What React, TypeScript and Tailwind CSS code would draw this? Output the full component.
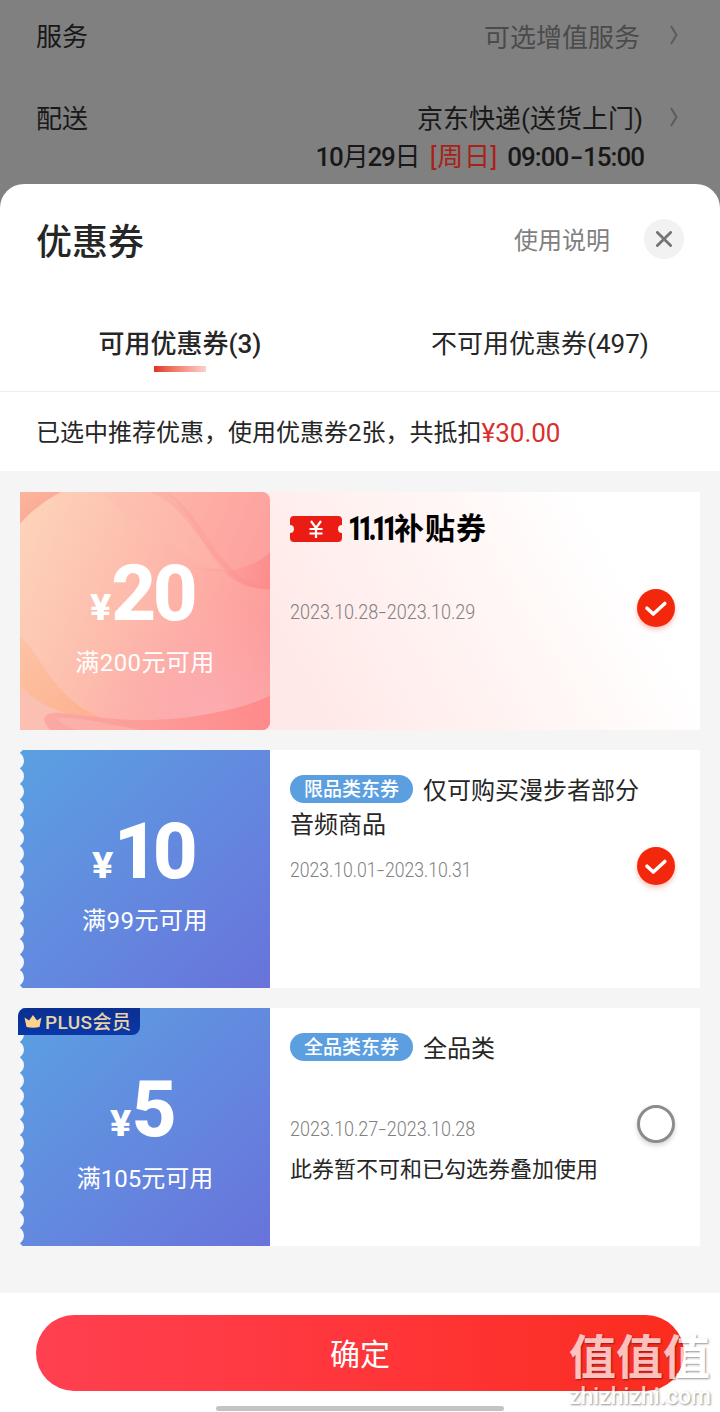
import type { ReactNode } from "react";

function Chevron() {
  return (
    <svg viewBox="0 0 10 20" className="h-5 w-2.5" fill="none" stroke="#5c5c5c" strokeWidth="2">
      <path d="M2 1 L7.5 10 L2 19" />
    </svg>
  );
}

function CheckCircle() {
  return (
    <div className="flex size-[38px] items-center justify-center rounded-full bg-[#f2270c] shadow-[0_3px_5px_rgba(242,39,12,0.28)]">
      <svg viewBox="0 0 38 38" className="size-[38px]" fill="none" stroke="#fff" strokeWidth="3.6" strokeLinecap="round" strokeLinejoin="round">
        <path d="M10 19.2 L16.3 25 L27.8 14.5" />
      </svg>
    </div>
  );
}

function EmptyCircle() {
  return <div className="size-[38px] rounded-full border-[3px] border-[#8c8c8c] bg-white shadow-[0_3px_5px_rgba(0,0,0,0.16)]" />;
}

function PinkArt() {
  return (
    <svg viewBox="0 0 250 238" className="absolute inset-0 h-full w-full">
      <defs>
        <linearGradient id="base" x1="0" y1="0.2" x2="1" y2="0.6">
          <stop offset="0" stopColor="#fdd2b9" />
          <stop offset="0.5" stopColor="#fdb9ab" />
          <stop offset="1" stopColor="#fd9b9b" />
        </linearGradient>
        <linearGradient id="corner" x1="0" y1="0" x2="1" y2="1">
          <stop offset="0" stopColor="#fdb59c" />
          <stop offset="1" stopColor="#f6a394" />
        </linearGradient>
        <linearGradient id="orange" x1="0" y1="0" x2="1" y2="1">
          <stop offset="0" stopColor="#fdc3a4" />
          <stop offset="1" stopColor="#fdb08f" />
        </linearGradient>
        <linearGradient id="wave" x1="0" y1="0" x2="1" y2="0">
          <stop offset="0" stopColor="#fba9a3" />
          <stop offset="1" stopColor="#ff8a8b" />
        </linearGradient>
        <linearGradient id="ribbon" x1="0" y1="0" x2="1" y2="1">
          <stop offset="0" stopColor="#fa9c98" stopOpacity="0.3" />
          <stop offset="1" stopColor="#fc8c8e" stopOpacity="0.35" />
        </linearGradient>
        <linearGradient id="fold" x1="0" y1="0" x2="1" y2="0">
          <stop offset="0" stopColor="#fd9494" stopOpacity="0" />
          <stop offset="1" stopColor="#fd8486" stopOpacity="0.7" />
        </linearGradient>
        <radialGradient id="glow" cx="0.75" cy="0.95" r="0.5">
          <stop offset="0" stopColor="#fcaeb2" stopOpacity="0.9" />
          <stop offset="1" stopColor="#fcaeb2" stopOpacity="0" />
        </radialGradient>
      </defs>
      <rect width="250" height="238" fill="url(#base)" />
      <rect width="250" height="238" fill="url(#glow)" />
      <path d="M83 0 C98 20 120 30 145 48 C165 64 180 76 210 80 C180 56 172 12 132 0 Z" fill="#fcbbaf" opacity="0.35" />
      <path d="M145 0 H250 V60 C236 72 222 78 204 79 C184 60 172 18 145 0 Z" fill="#ff9a9c" opacity="0.25" />
      <path d="M130 0 C158 10 174 40 198 70 C212 88 228 97 250 98 L250 95 C230 93 216 84 202 66 C180 38 168 10 146 0 Z" fill="url(#ribbon)" />
      <path d="M170 76 C205 84 234 76 250 60 L250 97 C230 97 214 92 202 77 Z" fill="url(#fold)" />
      <path d="M0 0 H41 C24 9 10 20 0 32 Z" fill="url(#corner)" />
      <path d="M0 145 C22 162 32 207 84 227 L60 227 C36 222 18 214 0 193 Z" fill="url(#orange)" />
      <path d="M0 193 C20 215 46 225 84 227 L84 238 H0 Z" fill="#fcc0b2" />
      <path d="M30 238 C18 226 26 219 42 221 C86 226 112 231 162 226 C200 221 228 214 250 204 V238 Z" fill="url(#wave)" />
      <path d="M36 226 C58 224 92 233 122 238 L56 238 C48 235 40 231 36 226 Z" fill="#fcb8ae" opacity="0.6" />
    </svg>
  );
}

function ScallopEdge() {
  return (
    <svg viewBox="0 0 6 238" className="absolute left-0 top-0 h-[238px] w-1.5" fill="#f5f8fc">
      {Array.from({ length: 16 }, (_, i) => (
        <circle key={i} cx="-5" cy={10.7 + i * 15.5} r="9" />
      ))}
      <circle cx="-5" cy="-4.8" r="9" />
    </svg>
  );
}

function Amount({ value, condition, digits, note }: { value: string; condition: string; digits: string; note: string }) {
  return (
    <div className="relative flex h-full flex-col items-center text-white">
      <div className="mt-[62px] flex h-20 items-baseline pr-1 leading-[80px] font-extrabold">
        <span className="inline-block origin-right scale-x-[1.1] text-[36px]">¥</span>
        <span className={digits}>{value}</span>
      </div>
      <div className={"mt-[11px] h-9 text-[24px] leading-9 whitespace-nowrap " + note}>{condition}</div>
    </div>
  );
}

function Coupon({ left, children, control, tone = "bg-white" }: { left: ReactNode; children: ReactNode; control: ReactNode; tone?: string }) {
  return (
    <div className={"flex h-[238px] w-[680px] " + tone}>
      {left}
      <div className="flex w-[367px] shrink-0 flex-col pl-5">{children}</div>
      <div className="mb-[7px] self-center">{control}</div>
    </div>
  );
}

function Dates({ children, width }: { children: ReactNode; width: string }) {
  return (
    <div className={width}>
      <span className="inline-flex origin-left scale-x-[0.855] items-center text-[21px] leading-6 font-[350] whitespace-nowrap text-[#808080]">{children}</span>
    </div>
  );
}

function Dash() {
  return <span className="inline-block scale-x-[1.5] px-[2px]">-</span>;
}

function Tag({ children }: { children: string }) {
  return (
    <span className="mr-2.5 inline-flex h-7 w-[123px] shrink-0 items-center justify-center rounded-full bg-[#5b9fe0] text-[19px] leading-7 font-medium text-white">
      <span className="pt-px">{children}</span>
    </span>
  );
}

export default function App() {
  return (
    <div className="relative flex h-[1412px] w-[720px] flex-col overflow-hidden bg-[#808080] font-[Roboto,'Noto_Sans_CJK_SC',sans-serif] text-[#262626]">
      <div className="h-[184px] shrink-0 text-[26px] text-[#181818]">
        <div className="flex h-[74px] items-center justify-between pl-9 pr-[41px]">
          <span>服务</span>
          <div className="flex items-center gap-[29px] text-[#4b4b4b]">
            <span className="pt-0.5">可选增值服务</span>
            <div className="pb-1"><Chevron /></div>
          </div>
        </div>
        <div className="mt-[25px] flex h-10 items-center justify-between pl-9 pr-[41px]">
          <span>配送</span>
          <div className="flex items-center gap-[26px]">
            <span>京东快递(送货上门)</span>
            <div className="pb-1"><Chevron /></div>
          </div>
        </div>
        <div className="flex h-9 items-center justify-end gap-[9px] pr-[76px] leading-9">
          <span className="font-medium tracking-[-1.2px]">10<span className="font-normal">月</span>29<span className="font-normal tracking-normal">日</span></span>
          <span className="tracking-[0.7px] text-[#a82218]">[周日]</span>
          <span className="flex font-medium tracking-[-1px]">09:00<span className="mx-[3.5px] scale-x-[1.5]">-</span>15:00</span>
        </div>
      </div>

      <div className="flex grow flex-col overflow-hidden rounded-t-[24px] bg-white">
        <div className="flex h-[110px] shrink-0 items-center pl-9 pr-9">
          <h1 className="pt-[7px] text-[36px] leading-[44px] font-medium">优惠券</h1>
          <span className="ml-auto pt-[3px] text-[24px] text-[#808080]">使用说明</span>
          <div className="ml-[34px] flex size-10 items-center justify-center rounded-full bg-[#f2f2f2]">
            <svg viewBox="0 0 16 16" className="size-4" stroke="#757575" strokeWidth="2.8" strokeLinecap="round">
              <path d="M1.4 1.4 L14.6 14.6 M14.6 1.4 L1.4 14.6" />
            </svg>
          </div>
        </div>

        <div className="grid h-[98px] shrink-0 grid-cols-2 border-b border-[#efefef] text-[26px] leading-9">
          <div className="flex flex-col items-center pt-8">
            <span className="font-medium">可用优惠券(3)</span>
            <span className="mt-1 h-1.5 w-[52px] bg-linear-to-r from-[#e0301e] to-[#fbd0cd]" />
          </div>
          <div className="flex flex-col items-center pt-8">
            <span>不可用优惠券(497)</span>
          </div>
        </div>

        <div className="flex h-[79px] shrink-0 items-center pt-[3px] pl-9 text-[24px] whitespace-nowrap">
          已选中推荐优惠，使用优惠券2张，共抵扣<span className="text-[26px] text-[#d9302c]">¥30.00</span>
        </div>

        <div className="flex h-[822px] shrink-0 flex-col gap-5 bg-[#f5f5f5] px-5 pt-[21px]">
          <Coupon
            tone="bg-[linear-gradient(60deg,#ffe9e8_0%,#ffe9e8_38%,#fff9f8_72%,#ffffff_85%)]"
            control={<CheckCircle />}
            left={
              <div className="relative h-[238px] w-[250px] shrink-0 overflow-hidden rounded-r-[8px]">
                <PinkArt />
                <Amount value="20" condition="满200元可用" digits="text-[78px] tracking-[-3.5px]" note="tracking-[0.4px]" />
              </div>
            }
          >
            <div className="mt-[21px] flex h-8 items-center">
              <svg viewBox="0 0 52 26" className="h-[26px] w-[52px] shrink-0">
                <path d="M4 0 H48 Q52 0 52 4 V9 A4 4 0 0 0 52 17 V22 Q52 26 48 26 H4 Q0 26 0 22 V17 A4 4 0 0 0 0 9 V4 Q0 0 4 0 Z" fill="#ea1c13" />
                <path d="M21 5 L26 12 L31 5 M26 12 V22 M19.5 13 H32.5 M19.5 17.5 H32.5" fill="none" stroke="#fff" strokeWidth="2.2" />
              </svg>
              <div className="ml-1.5 flex items-center leading-8 font-black text-black">
                <span className="inline-block w-[46px] origin-left scale-x-[0.76] text-[33px] tracking-[-5.4px] whitespace-nowrap">11.11</span>
                <span className="text-[30px] font-bold tracking-[1px]">补贴券</span>
              </div>
            </div>
            <Dates width="mt-[55px] h-6">2023.10.28<Dash />2023.10.29</Dates>
          </Coupon>

          <Coupon
            control={<CheckCircle />}
            left={
              <div className="relative h-[238px] w-[250px] shrink-0 overflow-hidden bg-linear-to-br from-[#5aa0e2] to-[#6873db]">
                <ScallopEdge />
                <Amount value="10" condition="满99元可用" digits="text-[78px] tracking-[-6px]" note="tracking-[0.5px]" />
              </div>
            }
          >
            <div className="mt-6 text-[24px] leading-[34px]">
              <div className="flex h-[34px] items-center whitespace-nowrap"><div className="flex pb-1"><Tag>限品类东券</Tag></div><span>仅可购买漫步者部分</span></div>
              <div>音频商品</div>
            </div>
            <Dates width="mt-4 h-6 origin-left scale-x-[0.98]">2023.10.01<Dash />2023.10.31</Dates>
          </Coupon>

          <Coupon
            control={<EmptyCircle />}
            left={
              <div className="relative h-[238px] w-[250px] shrink-0">
                <div className="relative h-full overflow-hidden bg-linear-to-br from-[#5aa0e2] to-[#6873db]">
                  <ScallopEdge />
                  <Amount value="5" condition="满105元可用" digits="text-[78px] tracking-[-3px]" note="" />
                </div>
                <div className="absolute -left-0.5 top-0 flex h-[27px] w-[122px] items-center rounded-tl-[8px] rounded-br-[8px] bg-linear-to-b from-[#0b2f91] to-[#0a38a8] pl-1.5">
                  <svg viewBox="0 0 18 13" className="mr-[3px] h-[13px] w-[18px] shrink-0" fill="#fdd28a">
                    <path d="M0.5 2.5 L5 5.5 L9 0 L13 5.5 L17.5 2.5 L15.5 12 Q9 13.5 2.5 12 Z" />
                  </svg>
                  <span className="pt-0.5 text-[19px] leading-[25px] font-medium tracking-[0.4px] whitespace-nowrap text-[#e6d3a6]">PLUS会员</span>
                </div>
              </div>
            }
          >
            <div className="mt-6 flex h-[34px] items-center text-[24px] leading-[34px]"><div className="flex pb-1"><Tag>全品类东券</Tag></div><span>全品类</span></div>
            <Dates width="mt-[51px] h-6">2023.10.27<Dash />2023.10.28</Dates>
            <div className="mt-[15px] text-[22px] leading-7 whitespace-nowrap">此券暂不可和已勾选券叠加使用</div>
          </Coupon>
        </div>

        <div className="flex grow flex-col items-center pt-[22px]">
          <button className="h-[76px] w-[648px] shrink-0 rounded-full bg-linear-to-r from-[#ff4050] via-[#ff363a] to-[#fb2c1c] pt-0.5 text-[30px] text-white">确定</button>
          <div className="mt-[15px] h-[5px] w-72 shrink-0 rounded-full bg-[#c4c4c4]" />
        </div>
      </div>

      <div className="absolute right-2 bottom-0 flex w-[143px] flex-col whitespace-nowrap text-white opacity-70 [text-shadow:1px_1px_2px_rgba(0,0,0,0.6)]">
        <span className="text-[47px] leading-[50px] font-bold">值值值</span>
        <span className="h-[29px] text-[23px] leading-[28px] font-medium">zhizhizhi.com</span>
      </div>
    </div>
  );
}
